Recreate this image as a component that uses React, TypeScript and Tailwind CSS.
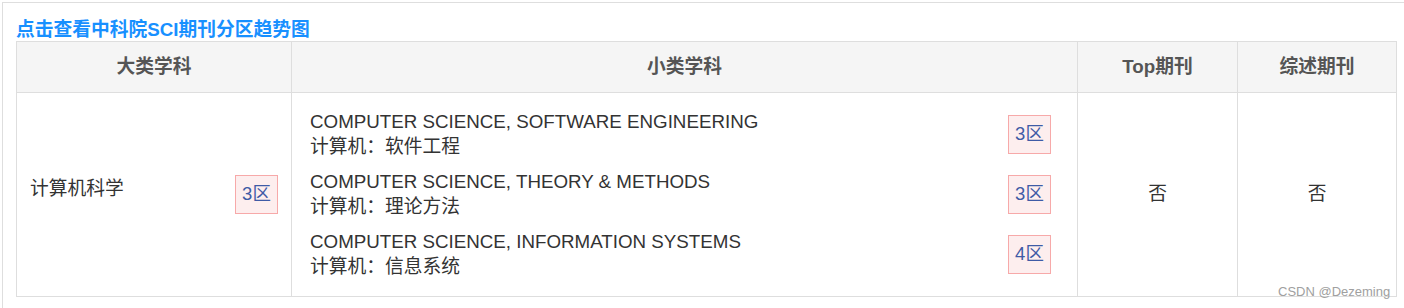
import React from "react";

const font = { fontFamily: '"Liberation Sans", "Noto Sans CJK SC", sans-serif' };

function Badge({ level }: { level: string }) {
  return (
    <span className="flex h-[39px] w-[43px] shrink-0 items-center justify-center border border-[#f7a9a9] bg-[#fdeeee] text-[18.5px] leading-none text-[#3f5ba6]">
      {level}区
    </span>
  );
}

const subjects = [
  { en: "COMPUTER SCIENCE, SOFTWARE ENGINEERING", zh: "计算机：软件工程", level: "3" },
  { en: "COMPUTER SCIENCE, THEORY & METHODS", zh: "计算机：理论方法", level: "3" },
  { en: "COMPUTER SCIENCE, INFORMATION SYSTEMS", zh: "计算机：信息系统", level: "4" },
];

export default function App() {
  return (
    <div className="relative h-[308px] overflow-hidden bg-white" style={font}>
      <div className="ml-[2px] mt-[2px] border-l border-t border-[#dedede] pb-6 pl-[13px] pr-[7px] pt-[14px]">
        {/* Title link */}
        <div className="h-[24px] pt-[1px] text-[18.75px] font-bold leading-[24px] text-[#1890ff]">
          点击查看中科院SCI期刊分区趋势图
        </div>

        {/* Table */}
        <div className="grid grid-cols-[275px_786px_160px_159px] border-l border-t border-[#dedede] text-[18.75px] text-[#333]">
          {/* Header */}
          {["大类学科", "小类学科", "Top期刊", "综述期刊"].map((h) => (
            <div
              key={h}
              className="flex h-[51px] items-center justify-center border-b border-r border-[#dedede] bg-[#f5f5f5] font-bold text-[#555]"
            >
              {h}
            </div>
          ))}

          {/* Body */}
          <div className="flex items-center justify-between border-b border-r border-[#dedede] pl-[13px] pr-[13px]">
            <span className="mb-[10px]">计算机科学</span>
            <Badge level="3" />
          </div>
          <div className="flex flex-col gap-[10px] border-b border-r border-[#dedede] pb-[17px] pl-[18px] pr-[26px] pt-4">
            {subjects.map((s) => (
              <div key={s.en} className="flex items-center justify-between">
                <div className="leading-[25px]">
                  <div>{s.en}</div>
                  <div>{s.zh}</div>
                </div>
                <Badge level={s.level} />
              </div>
            ))}
          </div>
          <div className="flex items-center justify-center border-b border-r border-[#dedede]">否</div>
          <div className="flex items-center justify-center border-b border-r border-[#dedede]">否</div>
        </div>
      </div>

      {/* Watermark */}
      <div className="absolute left-[1278px] top-[282px] text-[13px] leading-[20px] text-[#a0a0a0]">
        CSDN @Dezeming
      </div>
    </div>
  );
}
